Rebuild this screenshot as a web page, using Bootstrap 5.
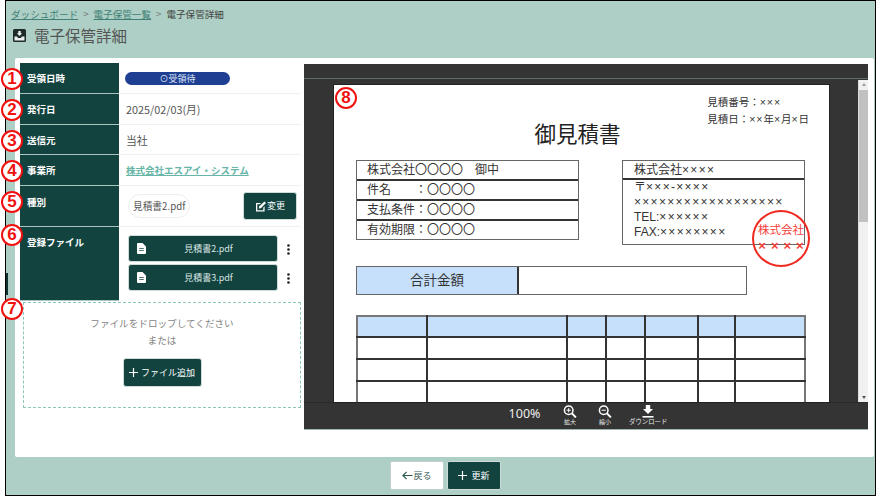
<!DOCTYPE html>
<html lang="ja">
<head>
  <meta charset="UTF-8" />
  <meta name="viewport" content="width=device-width, initial-scale=1.0"/>
  <title>電子保管詳細</title>
  <link rel="stylesheet" href="https://cdn.jsdelivr.net/npm/bootstrap@5.3.0/dist/css/bootstrap.min.css" />
  <style>
    html, body {
      height: 496px;
      overflow: hidden;
    }
    body {
      background-color: #fff;
      font-family: "Noto Sans CJK JP", "Noto Sans", sans-serif;
      color: #555;
      font-size: 10px;
    }
    .app-frame {
      position: relative;
      width: 871px;
      height: 496px;
      margin-left: 5px;
      border: 1px solid #000;
      background-color: #aecfc5;
    }
    .side-handle {
      position: absolute;
      left: 0;
      top: 272px;
      width: 2px;
      height: 22px;
      background-color: #12322f;
    }
    .page-head {
      height: 57px;
      padding: 7px 0 0 5px;
    }
    .crumbs {
      font-size: 9.6px;
      line-height: 13px;
      color: #444;
    }
    .crumbs a {
      color: #3f7f75;
    }
    .crumbs i {
      font-style: normal;
      color: #777;
      margin: 0 5px;
    }
    .page-title {
      font-size: 15.5px;
      line-height: 22px;
      font-weight: 400;
      color: #555;
      margin: 3px 0 0 2px;
    }
    .main-card {
      height: 399px;
      margin: 0 1px 0 9px;
      padding: 5px;
      background-color: #fff;
      border-radius: 2px;
      column-gap: 2px;
    }
    .info-side {
      width: 281px;
      flex: none;
      margin-right: 1px;
    }
    .info-row {
      display: flex;
      border-bottom: 1px solid #f1f1f1;
    }
    .info-row > dt {
      width: 99px;
      flex: none;
      padding: 7px 0 0 7px;
      background-color: #12433f;
      color: #fff;
      font-size: 9.5px;
      font-weight: 700;
      line-height: 16px;
      box-shadow: 0 1px 0 #a9c6bf;
    }
    .info-row > dd {
      flex: 1;
      margin: 0;
      padding: 0 4px 0 7px;
      display: flex;
      align-items: center;
      color: #555;
      font-size: 10.8px;
      line-height: 14px;
    }
    .h31 { height: 31px; }
    .h30 { height: 30px; }
    .h41 { height: 41px; }
    .h41 > dt { padding-top: 8px !important; }
    .h73 { height: 73px; border-bottom: 0 !important; }
    .state-pill {
      width: 105px;
      height: 13px;
      margin-left: -1px;
      background-color: #1f3f93;
      border-radius: 7px;
      color: #dbe3f5;
      font-size: 9px;
      line-height: 13px;
      text-align: center;
    }
    .firm-link {
      color: #66b5a6;
      font-weight: 700;
      font-size: 9.5px;
    }
    .file-chip {
      border: 1px solid #eee;
      border-radius: 12px;
      padding: 3px 4px;
      margin-left: 2px;
      font-size: 9.7px;
      line-height: 16px;
    }
    .btn-deep {
      background-color: #12433f;
      border: 1px solid #cfdcd9;
      color: #fff;
      border-radius: 3px;
      font-size: 9px;
    }
    .btn-deep:hover {
      background-color: #12433f;
      color: #fff;
    }
    .btn-change {
      width: 54px;
      height: 28px;
      padding: 0;
    }
    .file-list {
      padding: 8px 0 0 2px;
      align-self: flex-start;
    }
    .file-btn {
      width: 150px;
      height: 27px;
      padding: 0 6px 0 8px;
      margin-bottom: 2px;
    }
    .file-btn span {
      flex: 1;
      text-align: center;
      font-size: 9px;
      color: #d8e4e2;
    }
    .more-dots {
      width: 3px;
      margin-left: 9px;
    }
    .drop-zone {
      margin: 2px 0 0 3px;
      width: 278px;
      height: 106px;
      border: 1px dashed #8cc5ba;
      padding-top: 12px;
      text-align: center;
      color: #858585;
      font-size: 9.6px;
      line-height: 17px;
    }
    .btn-add {
      width: 79px;
      height: 29px;
      margin-top: 9px;
      padding: 0;
      column-gap: 3px;
    }
    .viewer {
      position: relative;
      width: 564px;
      height: 365px;
      flex: none;
      margin-top: 1px;
      background-color: #343434;
    }
    .viewer-top {
      height: 15px;
      border-bottom: 1px solid #5c6f6a;
    }
    .viewer-body {
      height: 323px;
      padding: 6px 0 0 30px;
    }
    .doc-page {
      position: relative;
      width: 495px;
      height: 317px;
      background-color: #fff;
      overflow: hidden;
      padding: 9px 0 0 22px;
      color: #333;
      font-family: "Liberation Sans", "Noto Sans CJK JP", sans-serif;
      font-size: 12px;
      box-shadow: 0 0 0 1px #222;
    }
    .doc-x {
      letter-spacing: 1.3px;
    }
    .view-scroll {
      position: absolute;
      right: 0;
      top: 16px;
      width: 10px;
      height: 322px;
      background-color: #f1f1f1;
      border-left: 1px solid #ddd;
      display: flex;
      flex-direction: column;
      align-items: center;
      justify-content: space-between;
      padding: 3px 0;
    }
    .view-scroll::before {
      content: "";
      position: absolute;
      left: 0;
      right: 0;
      top: 10px;
      height: 132px;
      background-color: #c1c1c1;
    }
    .scroll-up, .scroll-down {
      width: 0;
      height: 0;
      border-left: 2px solid transparent;
      border-right: 2px solid transparent;
    }
    .scroll-up { border-bottom: 3px solid #9a9a9a; }
    .scroll-down { border-top: 3px solid #555; }
    .doc-meta {
      width: 453px;
      font-size: 10.5px;
      line-height: 17px;
      color: #333;
    }
    .doc-meta .doc-x { letter-spacing: .9px; }
    .doc-title {
      width: 443px;
      text-align: center;
      font-size: 21.5px;
      line-height: 30px;
      color: #222;
      margin: -8px 0 0 0;
      height: 30px;
    }
    .doc-boxes {
      width: 449px;
      margin-top: 10px;
      height: 86px;
    }
    .doc-box-l {
      width: 223px;
      height: 80px;
      border: 1px solid #666;
    }
    .doc-box-l > div {
      height: 20px;
      padding-left: 10px;
      line-height: 19px;
      border-bottom: 2px solid #333;
      white-space: pre;
    }
    .doc-box-l > div:last-child { border-bottom: 0; }
    .doc-box-r {
      width: 183px;
      height: 85px;
      border: 1px solid #666;
      line-height: 15px;
    }
    .doc-box-r > div:first-child {
      height: 19px;
      line-height: 18px;
      padding-left: 11px;
      border-bottom: 2px solid #333;
    }
    .doc-addr {
      padding: 0 0 0 11px;
      white-space: nowrap;
    }
    .doc-stamp {
      position: absolute;
      left: 418px;
      top: 125px;
      width: 58px;
      height: 57px;
      border: 2.5px solid #f02a20;
      border-radius: 50%;
      color: #f5403a;
      font-size: 11.5px;
      line-height: 16px;
      text-align: center;
      padding-top: 10px;
      white-space: nowrap;
    }
    .stamp-x {
      font-size: 13px;
      font-weight: 700;
      letter-spacing: 5px;
      margin-right: -5px;
    }
    .doc-total {
      width: 391px;
      height: 29px;
      margin-top: 20px;
      border: 1px solid #666;
    }
    .doc-total > div:first-child {
      width: 162px;
      background-color: #c6e0fb;
      border-right: 2px solid #333;
      text-align: center;
      font-size: 13.5px;
      line-height: 27px;
    }
    .doc-grid {
      width: 449px;
      margin-top: 20px;
      border-collapse: collapse;
      table-layout: fixed;
    }
    .doc-grid td {
      height: 22px;
      padding: 0;
      border: 2px solid #333;
    }
    .doc-grid td:first-child { border-left-color: #777; }
    .doc-grid td:last-child { border-right-color: #777; }
    .doc-grid tr:first-child td {
      height: 21px;
      border-top-color: #777;
      background-color: #c6e0fb;
    }
    .viewer-tools {
      height: 27px;
      padding: 0 0 3px 204px;
      column-gap: 21px;
      color: #eee;
      border-top: 1px solid #2a2a2a;
      box-shadow: 0 1px 0 #9fb5af;
    }
    .zoom-rate {
      font-size: 12.5px;
      width: 33px;
      margin-right: 1px;
      text-align: center;
      font-family: "Noto Sans", sans-serif;
    }
    .tool-item {
      text-align: center;
      font-size: 6px;
      line-height: 7px;
      color: #e8e8e8;
      white-space: nowrap;
    }
    .tool-dl {
      font-size: 6.4px;
      margin-left: -4px;
    }
    .foot-bar {
      height: 37px;
      padding: 4px 0 0 10px;
      column-gap: 3px;
    }
    .btn-foot {
      width: 54px;
      height: 29px;
      padding: 0;
      font-size: 9px;
      border-radius: 2px;
    }
    .btn-back {
      background-color: #fff;
      color: #3a5e58;
      border: 1px solid #c3d0cd;
    }
    .tag-num {
      position: absolute;
      width: 22px;
      height: 22px;
      border: 2px solid #f01010;
      border-radius: 50%;
      background-color: #fff;
      color: #f01010;
      font-family: "Liberation Sans", sans-serif;
      font-weight: 700;
      font-size: 17px;
      line-height: 18px;
      text-align: center;
    }
    .t1 { left: -5px; top: 67px; }
    .t2 { left: -5px; top: 98px; }
    .t3 { left: -5px; top: 129px; }
    .t4 { left: -5px; top: 159px; }
    .t5 { left: -5px; top: 190px; }
    .t6 { left: -5px; top: 223px; }
    .t7 { left: -5px; top: 297px; }
    .t8 { left: 329px; top: 86px; }
  </style>
</head>
<body>
  <div class="app-frame">
    <div class="side-handle"></div>

    <div class="page-head">
      <div class="crumbs"><a href="#">ダッシュボード</a><i>&gt;</i><a href="#">電子保管一覧</a><i>&gt;</i>電子保管詳細</div>
      <h1 class="page-title d-flex align-items-center gap-2">
        <svg width="13" height="13" viewBox="0 0 13 13"><rect x="0" y="0" width="13" height="13" rx="1.5" fill="#1c2b2a"/><path d="M1.5 7.5h2.6l.9 1.6h3l.9-1.6h2.6v4h-10z" fill="#e9efed"/><path d="M5.3 2h2.4v2.2h1.5L6.5 6.9 3.8 4.2h1.5z" fill="#e9efed"/></svg>
        電子保管詳細
      </h1>
    </div>

    <div class="main-card d-flex">
      <div class="info-side">
        <dl class="m-0">
          <div class="info-row h31"><dt>受領日時</dt><dd><div class="state-pill">⊙受領待</div></dd></div>
          <div class="info-row h31"><dt>発行日</dt><dd>2025/02/03(月)</dd></div>
          <div class="info-row h30"><dt>送信元</dt><dd>当社</dd></div>
          <div class="info-row h31"><dt>事業所</dt><dd><a class="firm-link" href="#">株式会社エスアイ・システム</a></dd></div>
          <div class="info-row h41"><dt>種別</dt><dd class="justify-content-between">
            <span class="file-chip">見積書2.pdf</span>
            <button class="btn btn-deep btn-change d-flex align-items-center justify-content-center" type="button">
              <svg width="12" height="12" viewBox="0 0 12 12"><path d="M1 3h5L4.8 4.3H2.3v6h6V7.6l1.3-1.3v5.3H1z" fill="#fff"/><path d="M4.2 6.6l5.2-5.2 1.6 1.6-5.2 5.2-2 .4z" fill="#fff"/></svg>変更
            </button>
          </dd></div>
          <div class="info-row h73"><dt>登録ファイル</dt><dd class="d-block">
            <div class="file-list">
              <div class="d-flex align-items-center">
                <button class="btn btn-deep file-btn d-flex align-items-center" type="button">
                  <svg width="9" height="11" viewBox="0 0 9 11"><path fill-rule="evenodd" d="M1 0h4.5L9 3.5V10a1 1 0 0 1-1 1H1a1 1 0 0 1-1-1V1a1 1 0 0 1 1-1zm1.2 5.2v.9h4.6v-.9zm0 2v.9h4.6v-.9z" fill="#fff"/></svg>
                  <span>見積書2.pdf</span>
                </button>
                <svg class="more-dots" width="3" height="11" viewBox="0 0 3 11"><circle cx="1.5" cy="1.5" r="1.3" fill="#222"/><circle cx="1.5" cy="5.5" r="1.3" fill="#222"/><circle cx="1.5" cy="9.5" r="1.3" fill="#222"/></svg>
              </div>
              <div class="d-flex align-items-center">
                <button class="btn btn-deep file-btn d-flex align-items-center" type="button">
                  <svg width="9" height="11" viewBox="0 0 9 11"><path fill-rule="evenodd" d="M1 0h4.5L9 3.5V10a1 1 0 0 1-1 1H1a1 1 0 0 1-1-1V1a1 1 0 0 1 1-1zm1.2 5.2v.9h4.6v-.9zm0 2v.9h4.6v-.9z" fill="#fff"/></svg>
                  <span>見積書3.pdf</span>
                </button>
                <svg class="more-dots" width="3" height="11" viewBox="0 0 3 11"><circle cx="1.5" cy="1.5" r="1.3" fill="#222"/><circle cx="1.5" cy="5.5" r="1.3" fill="#222"/><circle cx="1.5" cy="9.5" r="1.3" fill="#222"/></svg>
              </div>
            </div>
          </dd></div>
        </dl>
        <div class="drop-zone">
          <div>ファイルをドロップしてください</div>
          <div>または</div>
          <button class="btn btn-deep btn-add d-inline-flex align-items-center justify-content-center" type="button">
            <svg width="9" height="9" viewBox="0 0 9 9" stroke="#fff" stroke-width="1.2"><path d="M4.5 0v9M0 4.5h9"/></svg>ファイル追加
          </button>
        </div>
      </div>

      <div class="viewer">
        <div class="viewer-top"></div>
        <div class="viewer-body">
          <div class="doc-page">
            <div class="doc-meta d-flex justify-content-end"><div class="text-start">見積番号：<span class="doc-x">×××</span><br>見積日：<span class="doc-x">××</span>年<span class="doc-x">×</span>月<span class="doc-x">×</span>日</div></div>
            <div class="doc-title">御見積書</div>
            <div class="doc-boxes d-flex justify-content-between">
              <div class="doc-box-l">
                <div>株式会社〇〇〇〇　御中</div>
                <div>件名　　：〇〇〇〇</div>
                <div>支払条件：〇〇〇〇</div>
                <div>有効期限：〇〇〇〇</div>
              </div>
              <div class="doc-box-r">
                <div>株式会社<span class="doc-x">××××</span></div>
                <div class="doc-addr">〒<span class="doc-x">×××-××××</span><br><span class="doc-x">××××××××××××××××××</span><br>TEL:<span class="doc-x">××××××</span><br>FAX:<span class="doc-x">××××××××</span></div>
              </div>
            </div>
            <div class="doc-stamp">株式会社<br><span class="stamp-x">××××</span></div>
            <div class="doc-total d-flex"><div>合計金額</div><div></div></div>
            <table class="doc-grid">
              <colgroup><col style="width:70px"><col style="width:140px"><col style="width:39px"><col style="width:39px"><col style="width:53px"><col style="width:37px"><col style="width:70px"></colgroup>
              <tr><td></td><td></td><td></td><td></td><td></td><td></td><td></td></tr>
              <tr><td></td><td></td><td></td><td></td><td></td><td></td><td></td></tr>
              <tr><td></td><td></td><td></td><td></td><td></td><td></td><td></td></tr>
              <tr><td></td><td></td><td></td><td></td><td></td><td></td><td></td></tr>
            </table>
          </div>
        </div>
        <div class="view-scroll"><div class="scroll-up"></div><div class="scroll-down"></div></div>
        <div class="viewer-tools d-flex align-items-center">
          <div class="zoom-rate">100%</div>
          <div class="tool-item">
            <svg class="d-block mx-auto" width="14" height="13" viewBox="0 0 14 13" fill="none" stroke="#fff"><circle cx="5.7" cy="5.2" r="4.3" stroke-width="1.5"/><path d="M8.9 8.4l4 4" stroke-width="2"/><path d="M3.6 5.2h4.2M5.7 3.1v4.2" stroke-width="1"/></svg>
            拡大
          </div>
          <div class="tool-item">
            <svg class="d-block mx-auto" width="14" height="13" viewBox="0 0 14 13" fill="none" stroke="#fff"><circle cx="5.7" cy="5.2" r="4.3" stroke-width="1.5"/><path d="M8.9 8.4l4 4" stroke-width="2"/><path d="M3.6 5.2h4.2" stroke-width="1"/></svg>
            縮小
          </div>
          <div class="tool-item tool-dl">
            <svg class="d-block mx-auto" width="12" height="13" viewBox="0 0 12 13"><path d="M3.8 0h4.4v4H11L6 9 1 4h2.8z" fill="#fff"/><rect x="0.5" y="11" width="11" height="1.6" fill="#fff"/></svg>
            ダウンロード
          </div>
        </div>
      </div>
    </div>

    <div class="foot-bar d-flex justify-content-center">
      <button class="btn btn-foot btn-back d-flex align-items-center justify-content-center" type="button">
        <svg width="11" height="9" viewBox="0 0 11 9" fill="none" stroke="#2e5a53" stroke-width="1.2"><path d="M10.5 4.5H1M4.6.8L.9 4.5l3.7 3.7"/></svg>戻る
      </button>
      <button class="btn btn-deep btn-foot d-flex align-items-center justify-content-center" type="button">
        <svg class="me-1" width="9" height="9" viewBox="0 0 9 9" stroke="#fff" stroke-width="1.2"><path d="M4.5 0v9M0 4.5h9"/></svg>更新
      </button>
    </div>

    <div class="tag-num t1">1</div>
    <div class="tag-num t2">2</div>
    <div class="tag-num t3">3</div>
    <div class="tag-num t4">4</div>
    <div class="tag-num t5">5</div>
    <div class="tag-num t6">6</div>
    <div class="tag-num t7">7</div>
    <div class="tag-num t8">8</div>
  </div>

  <script src="https://cdn.jsdelivr.net/npm/bootstrap@5.3.0/dist/js/bootstrap.bundle.min.js"></script>
</body>
</html>
